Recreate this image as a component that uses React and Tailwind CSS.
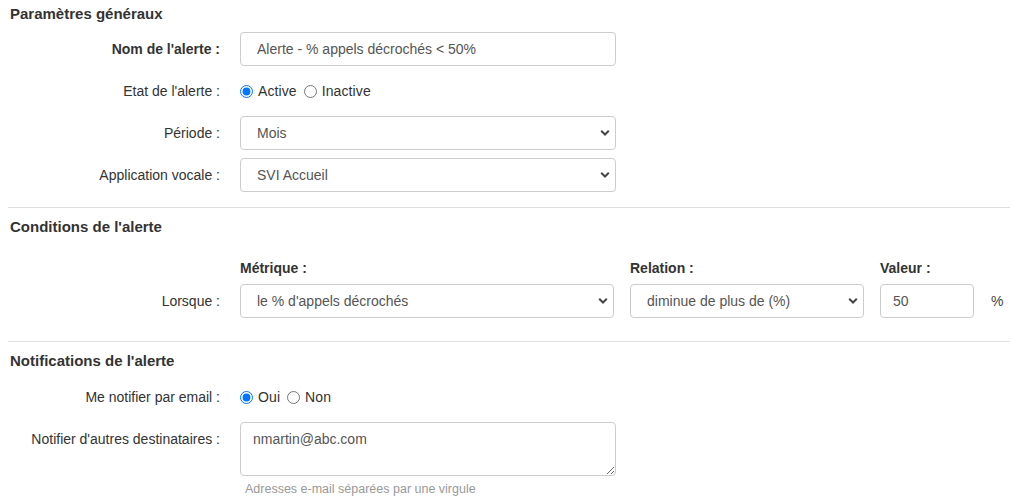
import { useState } from "react";

const LABEL = "w-[210px] shrink-0 text-right";
const BOX = "h-[34px] w-full rounded-[4px] border border-[#ccc] bg-white text-[14px] text-[#555] outline-none";

function Chevron() {
  return (
    <svg className="pointer-events-none absolute right-[6px] top-1/2 -translate-y-1/2" width="10" height="7" viewBox="0 0 10 7">
      <path d="M1.2 1.3 L5 5 L8.8 1.3" fill="none" stroke="#444" strokeWidth="2" />
    </svg>
  );
}

function Select({ value, options, className = "" }) {
  return (
    <div className={`relative shrink-0 ${className}`}>
      <select defaultValue={value} className={`${BOX} appearance-none pl-4 pr-8`}>
        {options.map((o) => <option key={o}>{o}</option>)}
      </select>
      <Chevron />
    </div>
  );
}

function Row({ label, bold, children, center = true }) {
  return (
    <div className={`flex gap-5 ${center ? "items-center" : "items-start"}`}>
      <label className={`${LABEL} ${bold ? "font-bold" : ""} ${center ? "" : "pt-[7px]"}`}>{label}</label>
      {children}
    </div>
  );
}

function Radios({ name, options, value }) {
  const [v, setV] = useState(value);
  return (
    <div className="flex h-[34px] items-center">
      {options.map((o) => (
        <label key={o} className="mr-[7px] flex items-center gap-[5px]">
          <input type="radio" name={name} checked={v === o} onChange={() => setV(o)} className="h-[13px] w-[13px]" />
          <span className="tracking-[0.1px]">{o}</span>
        </label>
      ))}
    </div>
  );
}

export default function App() {
  return (
    <div className="min-h-screen bg-white font-['Liberation_Sans',Arial,sans-serif] text-[14px] leading-[20px] text-[#333]">
      <section className="px-[10px]">
        <h2 className="pt-[4px] text-[15px] font-bold">Paramètres généraux</h2>
        <div className="mt-[8px] flex flex-col gap-2">
          <Row label="Nom de l'alerte :" bold>
            <div className="w-[376px]">
              <input type="text" defaultValue="Alerte - % appels décrochés < 50%" className={`${BOX} px-4`} />
            </div>
          </Row>
          <Row label="Etat de l'alerte :">
            <Radios name="etat" options={["Active", "Inactive"]} value="Active" />
          </Row>
          <Row label="Période :">
            <Select value="Mois" options={["Jour", "Semaine", "Mois"]} className="w-[376px]" />
          </Row>
          <Row label="Application vocale :">
            <Select value="SVI Accueil" options={["SVI Accueil", "SVI Support"]} className="w-[376px]" />
          </Row>
        </div>
      </section>

      <hr className="ml-2 mr-px mt-[15px] border-t border-[#ddd]" />

      <section className="px-[10px]">
        <h2 className="mt-[9px] text-[15px] font-bold">Conditions de l'alerte</h2>
        <div className="mt-[21px] flex gap-4 pl-[230px] font-bold">
          <div className="w-[374px] shrink-0">Métrique :</div>
          <div className="w-[234px] shrink-0">Relation :</div>
          <div className="w-[94px] shrink-0">Valeur :</div>
        </div>
        <div className="mt-[6px] flex items-center gap-5">
          <label className={LABEL}>Lorsque :</label>
          <div className="flex items-center gap-4">
            <Select value="le % d'appels décrochés" options={["le % d'appels décrochés", "le nombre d'appels"]} className="w-[374px]" />
            <Select value="diminue de plus de (%)" options={["diminue de plus de (%)", "augmente de plus de (%)"]} className="w-[234px]" />
            <div className="w-[94px] shrink-0">
              <input type="text" defaultValue="50" className={`${BOX} px-[12px]`} />
            </div>
            <span className="ml-px text-[#444]">%</span>
          </div>
        </div>
      </section>

      <hr className="ml-2 mr-px mt-[23px] border-t border-[#ddd]" />

      <section className="px-[10px] pb-4">
        <h2 className="mt-[9px] text-[15px] font-bold">Notifications de l'alerte</h2>
        <div className="mt-[9px] flex flex-col gap-2">
          <Row label="Me notifier par email :">
            <Radios name="mail" options={["Oui", "Non"]} value="Oui" />
          </Row>
          <Row label="Notifier d'autres destinataires :" center={false}>
            <div className="w-[376px]">
              <textarea defaultValue="nmartin@abc.com" className="block h-[54px] w-full rounded-[4px] border border-[#ccc] bg-white px-[12px] py-[6px] text-[14px] text-[#555] outline-none" />
              <p className="mt-[5px] pl-[5px] text-[12.5px] leading-[16px] text-[#999]">Adresses e-mail séparées par une virgule</p>
            </div>
          </Row>
        </div>
      </section>
    </div>
  );
}
